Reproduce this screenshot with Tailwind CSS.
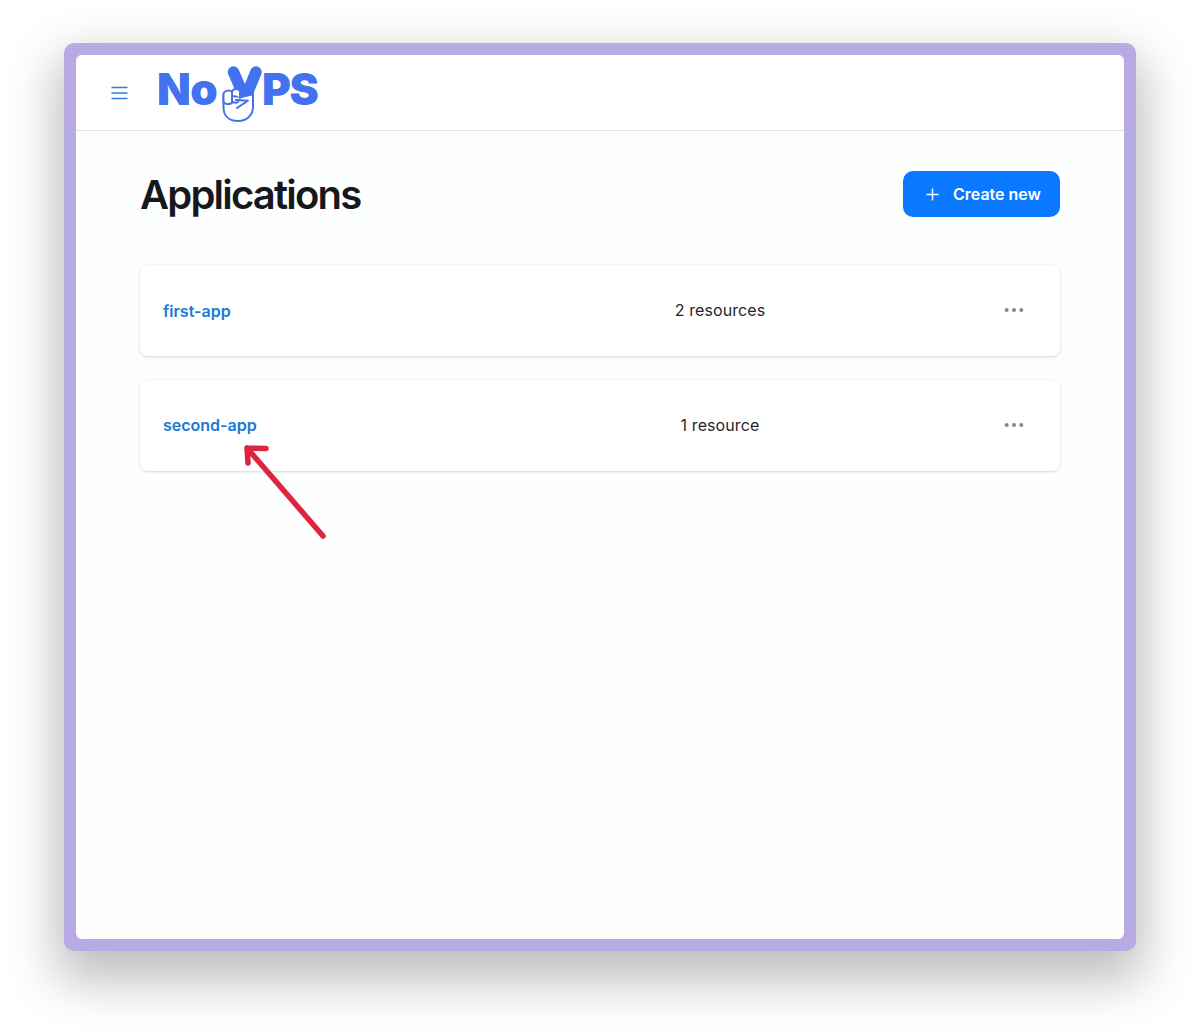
<!doctype html>
<html>
<head>
<meta charset="utf-8">
<script src="https://cdn.jsdelivr.net/npm/@tailwindcss/browser@4"></script>
</head>
<body class="bg-white font-['Inter',sans-serif] overflow-hidden">
<div class="w-[1200px] h-[1036px] pt-[43px] px-[64px]">
  <div class="relative w-[1072px] h-[908px] p-3 rounded-[10px] bg-[#b8aae2] shadow-[0_22px_50px_8px_rgba(0,0,0,0.26)]">
    <div class="w-full h-full flex flex-col rounded-[6px] overflow-hidden bg-[#fdfefe]">
      <header class="h-[76px] shrink-0 bg-white border-b border-[#dfe1ea] flex items-center pl-[35px]">
        <svg width="17" height="14" viewBox="0 0 17 14" class="shrink-0" fill="none" stroke="#2f7fd0" stroke-width="1.4"><path d="M0.5 1.5H16.5M0.5 7H16.5M0.5 12.500H16.5"/></svg>
        <div class="relative ml-[29px] w-[164px] h-[76px] text-[#4272ee] font-black text-[44px] leading-none tracking-[-0.5px]">
          <span class="absolute left-0 top-[12px]">No</span>
          <span class="absolute left-[105px] top-[12px] tracking-[-1.5px]">PS</span>
          <svg class="absolute left-[60px] top-[8px]" width="50" height="62" viewBox="0 0 50 62" fill="none">
            <path d="M16.500 9 L26 31 M39 9 L30 31" stroke="#4272ee" stroke-width="11.500" stroke-linecap="round"/>
            <path d="M6.500 32 L6.500 44 C6.500 53 12 58 21 58 C30 58 36 52 36 44 L36 31 L24 34 Z" fill="#fff" stroke="#4272ee" stroke-width="2"/>
            <path d="M6.500 32 C6 27.500 13 26.500 15 29 L15 40 C11 42 6.500 41 6.500 38 Z M15 29 C16 24.500 23 25.500 23 29 L23 35 M15 38 C18 41 21 40 22 37" fill="#fff" stroke="#4272ee" stroke-width="2" stroke-linejoin="round" stroke-linecap="round"/>
            <path d="M19 37 L31 37.700 L20 45 M23 34 L36 31" fill="none" stroke="#4272ee" stroke-width="2" stroke-linejoin="round" stroke-linecap="round"/>
          </svg>
        </div>
      </header>
      <main class="flex-1 px-[64px] pt-[40px]">
        <div class="flex items-center justify-between h-[46px]">
          <h1 class="mt-[2px] text-[40px] leading-[48px] font-semibold tracking-[-1.8px] text-[#17181c]">Applications</h1>
          <button class="w-[157px] h-[46px] rounded-[10px] bg-[#0a78ff] text-white text-[16px] font-semibold flex items-center pl-[23px] gap-[14px]">
            <svg width="13" height="13" viewBox="0 0 13 13" stroke="#fff" stroke-width="1.4" fill="none"><path d="M6.5 0.5V12.5M0.5 6.5H12.5"/></svg>
            <span class="mt-[-1px]">Create new</span>
          </button>
        </div>
        <div class="mt-[48px] flex flex-col gap-[24px]">
          <div class="h-[91px] rounded-[8px] bg-white shadow-[0_1px_3px_rgba(30,40,60,0.16),0_0_2px_rgba(30,40,60,0.05)] grid grid-cols-[400px_314px_1fr] items-center px-[23px]">
            <a class="text-[16px] font-semibold text-[#1a78d6]">first-app</a>
            <span class="mt-[-1px] text-center text-[16px] tracking-[0.1px] text-[#25272b]">2 resources</span>
            <svg class="justify-self-end mr-[13px] mt-[-1px]" width="20" height="6" viewBox="0 0 20 6" fill="#85878c"><circle cx="2.700" cy="3" r="2"/><circle cx="10" cy="3" r="2"/><circle cx="17.300" cy="3" r="2"/></svg>
          </div>
          <div class="h-[91px] rounded-[8px] bg-white shadow-[0_1px_3px_rgba(30,40,60,0.16),0_0_2px_rgba(30,40,60,0.05)] grid grid-cols-[400px_314px_1fr] items-center px-[23px]">
            <a class="mt-[-1px] text-[16px] font-semibold text-[#1a78d6]">second-app</a>
            <span class="mt-[-1px] text-center text-[16px] tracking-[0.1px] text-[#25272b]">1 resource</span>
            <svg class="justify-self-end mr-[13px] mt-[-1px]" width="20" height="6" viewBox="0 0 20 6" fill="#85878c"><circle cx="2.700" cy="3" r="2"/><circle cx="10" cy="3" r="2"/><circle cx="17.300" cy="3" r="2"/></svg>
          </div>
        </div>
      </main>
    </div>
    <svg class="absolute left-[176px] top-[398px]" width="90" height="100" viewBox="0 0 90 100" fill="none" stroke="#e0243f" stroke-width="5.500" stroke-linecap="round" stroke-linejoin="round"><path d="M83 95 L7 7 M7 7 L26 7.500 M7 7 L8 22"/></svg>
  </div>
</div>
</body>
</html>
